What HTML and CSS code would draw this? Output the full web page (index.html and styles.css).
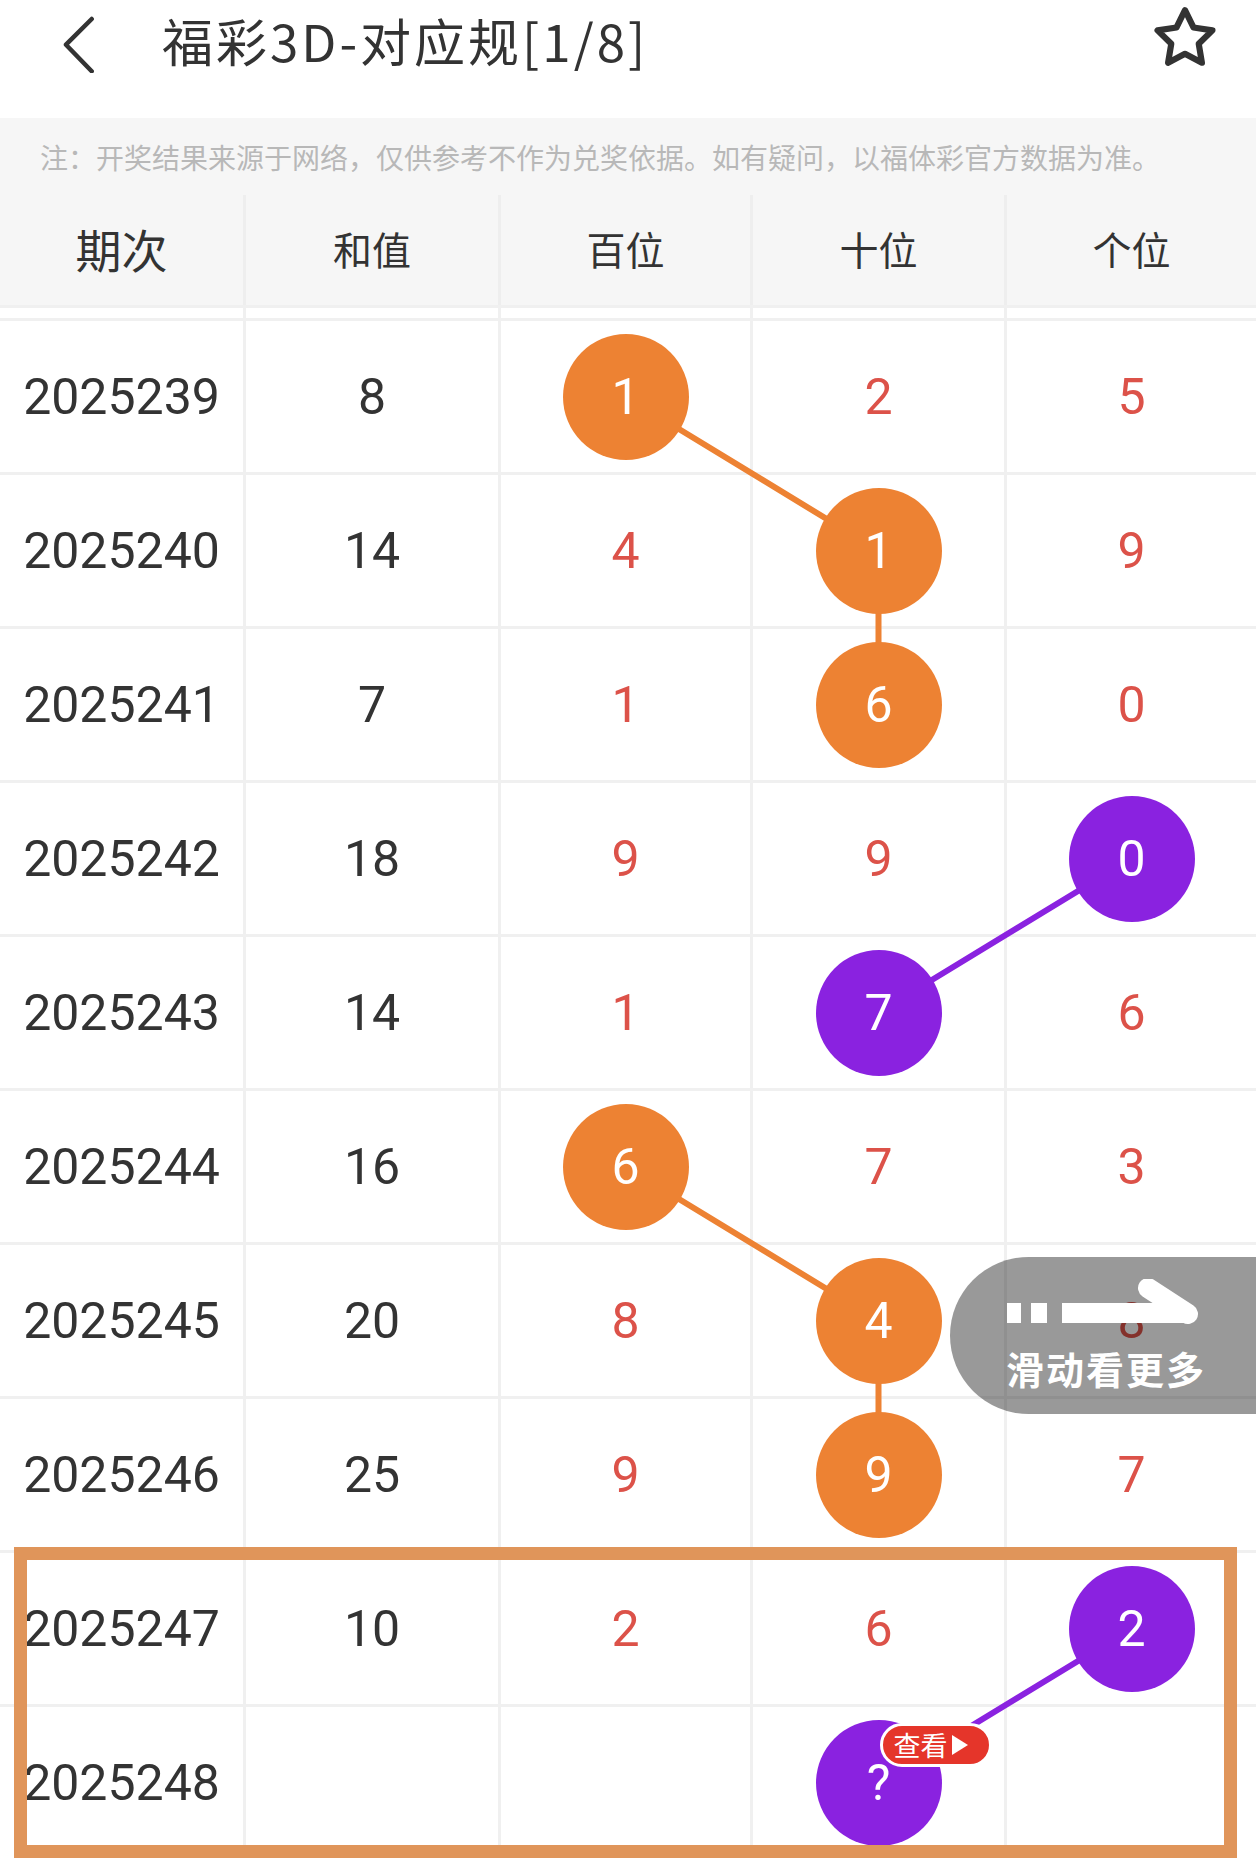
FILE: index.html
```html
<!DOCTYPE html>
<html lang="zh-CN">
<head>
<meta charset="utf-8">
<title>福彩3D-对应规[1/8]</title>
<link rel="stylesheet" href="styles.css">
</head>
<body>
<div class="page">
  <header class="topbar">
    <svg class="back" width="40" height="70" viewBox="0 0 40 70"><path d="M31.7 16 L6 41.7 L31.7 68.3" fill="none" stroke="#333" stroke-width="4.5" stroke-linecap="round" stroke-linejoin="round"/></svg>
    <h1 class="title">福彩3D-对应规[1/8]</h1>
    <svg class="star" width="66" height="66" viewBox="0 0 64 64"><path d="M32 5 L40.2 21.8 L58.6 24.6 L45.3 37.6 L48.4 56 L32 47.3 L15.6 56 L18.7 37.6 L5.4 24.6 L23.8 21.8 Z" fill="none" stroke="#333" stroke-width="6" stroke-linejoin="round"/></svg>
  </header>

  <div class="notice">注：开奖结果来源于网络，仅供参考不作为兑奖依据。如有疑问，以福体彩官方数据为准。</div>

  <div class="thead cols">
    <div class="th th-first">期次</div>
    <div class="th">和值</div>
    <div class="th">百位</div>
    <div class="th">十位</div>
    <div class="th">个位</div>
  </div>

  <div class="strip cols">
    <div></div><div></div><div></div><div></div><div></div>
  </div>

  <div class="tbody">
    <svg class="links" width="1256" height="1540" viewBox="0 0 1256 1540">
      <g stroke-width="6" stroke-linecap="round">
        <line x1="625.5" y1="75.5" x2="878.5" y2="229.5" stroke="#ed8233"/>
        <line x1="878.5" y1="229.5" x2="878.5" y2="383.5" stroke="#ed8233"/>
        <line x1="1131.5" y1="537.5" x2="878.5" y2="691.5" stroke="#8a22e0"/>
        <line x1="625.5" y1="845.5" x2="878.5" y2="999.5" stroke="#ed8233"/>
        <line x1="878.5" y1="999.5" x2="878.5" y2="1153.5" stroke="#ed8233"/>
        <line x1="1131.5" y1="1307.5" x2="878.5" y2="1461.5" stroke="#8a22e0"/>
      </g>
    </svg>

    <div class="row cols">
      <div class="td">2025239</div><div class="td">8</div>
      <div class="td"><span class="ball orange">1</span></div>
      <div class="td red">2</div><div class="td red">5</div>
    </div>
    <div class="row cols">
      <div class="td">2025240</div><div class="td">14</div>
      <div class="td red">4</div>
      <div class="td"><span class="ball orange">1</span></div>
      <div class="td red">9</div>
    </div>
    <div class="row cols">
      <div class="td">2025241</div><div class="td">7</div>
      <div class="td red">1</div>
      <div class="td"><span class="ball orange">6</span></div>
      <div class="td red">0</div>
    </div>
    <div class="row cols">
      <div class="td">2025242</div><div class="td">18</div>
      <div class="td red">9</div><div class="td red">9</div>
      <div class="td"><span class="ball purple">0</span></div>
    </div>
    <div class="row cols">
      <div class="td">2025243</div><div class="td">14</div>
      <div class="td red">1</div>
      <div class="td"><span class="ball purple">7</span></div>
      <div class="td red">6</div>
    </div>
    <div class="row cols">
      <div class="td">2025244</div><div class="td">16</div>
      <div class="td"><span class="ball orange">6</span></div>
      <div class="td red">7</div><div class="td red">3</div>
    </div>
    <div class="row cols">
      <div class="td">2025245</div><div class="td">20</div>
      <div class="td red">8</div>
      <div class="td"><span class="ball orange">4</span></div>
      <div class="td red">8</div>
    </div>
    <div class="row cols">
      <div class="td">2025246</div><div class="td">25</div>
      <div class="td red">9</div>
      <div class="td"><span class="ball orange">9</span></div>
      <div class="td red">7</div>
    </div>
    <div class="row cols">
      <div class="td">2025247</div><div class="td">10</div>
      <div class="td red">2</div><div class="td red">6</div>
      <div class="td"><span class="ball purple">2</span></div>
    </div>
    <div class="row cols">
      <div class="td">2025248</div><div class="td"></div>
      <div class="td"></div>
      <div class="td"><span class="ball purple">?<span class="badge">查看<i class="tri"></i></span></span></div>
      <div class="td"></div>
    </div>

    <div class="highlight"></div>

    <div class="swipe">
      <svg class="swipe-arrow" width="200" height="60" viewBox="0 0 200 60">
        <rect x="1" y="24" width="14" height="20" fill="#fff"/>
        <rect x="25" y="24" width="16" height="20" fill="#fff"/>
        <rect x="56" y="24" width="126" height="20" fill="#fff"/>
        <path d="M142 9 L182 35" stroke="#fff" stroke-width="20" stroke-linecap="round" fill="none"/>
      </svg>
      <div class="swipe-text">滑动看更多</div>
    </div>
  </div>
</div>
</body>
</html>
```

FILE: styles.css
```css
* { box-sizing: border-box; }
html, body { margin: 0; padding: 0; background: #fff; }
body {
  width: 1256px;
  height: 1860px;
  overflow: hidden;
  font-family: Roboto, "Noto Sans CJK SC", sans-serif;
  color: #333;
}
.page { width: 1256px; }

.topbar {
  height: 88px;
  margin-bottom: 30px;
  display: flex;
  align-items: center;
  position: relative;
}
.back { margin-left: 60px; margin-top: -12px; flex: none; }
.title {
  margin: -8px 0 0 62px;
  font-family: "Noto Sans CJK SC", sans-serif;
  font-weight: 400;
  font-size: 51px;
  line-height: 1;
  color: #333;
  letter-spacing: 3px;
}
.star { margin-left: auto; margin-right: 38px; margin-top: -12px; flex: none; }

.notice {
  height: 77px;
  background: #f6f6f6;
  padding-left: 40px;
  display: flex;
  align-items: center;
  font-family: "Noto Sans CJK SC", sans-serif;
  font-size: 28px;
  color: #b8b8b8;
  white-space: nowrap;
}

.cols {
  display: grid;
  grid-template-columns: 243px 252px 249px 251px 249px;
  column-gap: 3px;
}

.thead {
  height: 110px;
  background: #eeeeee;
}
.th {
  background: #f6f6f6;
  display: flex;
  align-items: center;
  justify-content: center;
  font-family: "Noto Sans CJK SC", sans-serif;
  font-size: 39px;
  color: #333;
  padding-bottom: 4px;
}
.th-first { font-size: 46px; }

.strip {
  background: #f0f0f0;
  padding: 3px 0;
}
.strip div { height: 10px; background: #fff; }

.tbody {
  position: relative;
  display: flex;
  flex-direction: column;
  row-gap: 3px;
  background: #f0f0f0;
}
.row { height: 151px; }
.td {
  background: #fff;
  display: flex;
  align-items: center;
  justify-content: center;
  font-size: 50px;
  color: #333;
}
.td.red { color: #dc5249; }

.links {
  position: absolute;
  left: 0;
  top: 0;
  z-index: 1;
  pointer-events: none;
}

.ball {
  position: relative;
  z-index: 2;
  width: 126px;
  height: 126px;
  border-radius: 50%;
  display: flex;
  align-items: center;
  justify-content: center;
  color: #fff;
  font-size: 50px;
}
.ball.orange { background: #ed8233; }
.ball.purple { background: #8a22e0; }

.badge {
  position: absolute;
  left: 64px;
  top: 3px;
  height: 44px;
  width: 112px;
  border: 3px solid #fff;
  border-radius: 22px;
  background: #e5352a;
  display: flex;
  align-items: center;
  padding-left: 11px;
  font-family: "Noto Sans CJK SC", sans-serif;
  font-size: 27px;
  line-height: 1;
  color: #fff;
  z-index: 4;
}
.tri {
  display: inline-block;
  width: 0;
  height: 0;
  margin-left: 4px;
  border-top: 10px solid transparent;
  border-bottom: 10px solid transparent;
  border-left: 16px solid #fff;
}

.highlight {
  position: absolute;
  left: 14px;
  top: 1226px;
  width: 1223px;
  height: 311px;
  border: 13px solid #e0955a;
  z-index: 3;
  pointer-events: none;
}

.swipe {
  position: absolute;
  left: 950px;
  top: 936px;
  width: 306px;
  height: 157px;
  border-radius: 79px 0 0 79px;
  background: rgba(0, 0, 0, 0.4);
  z-index: 5;
  display: flex;
  flex-direction: column;
  padding: 22px 0 0 56px;
}
.swipe-arrow { display: block; }
.swipe-text {
  margin-top: 8px;
  font-family: "Noto Sans CJK SC", sans-serif;
  font-weight: 700;
  font-size: 38px;
  line-height: 1.1;
  color: #fff;
  letter-spacing: 2px;
}
```
